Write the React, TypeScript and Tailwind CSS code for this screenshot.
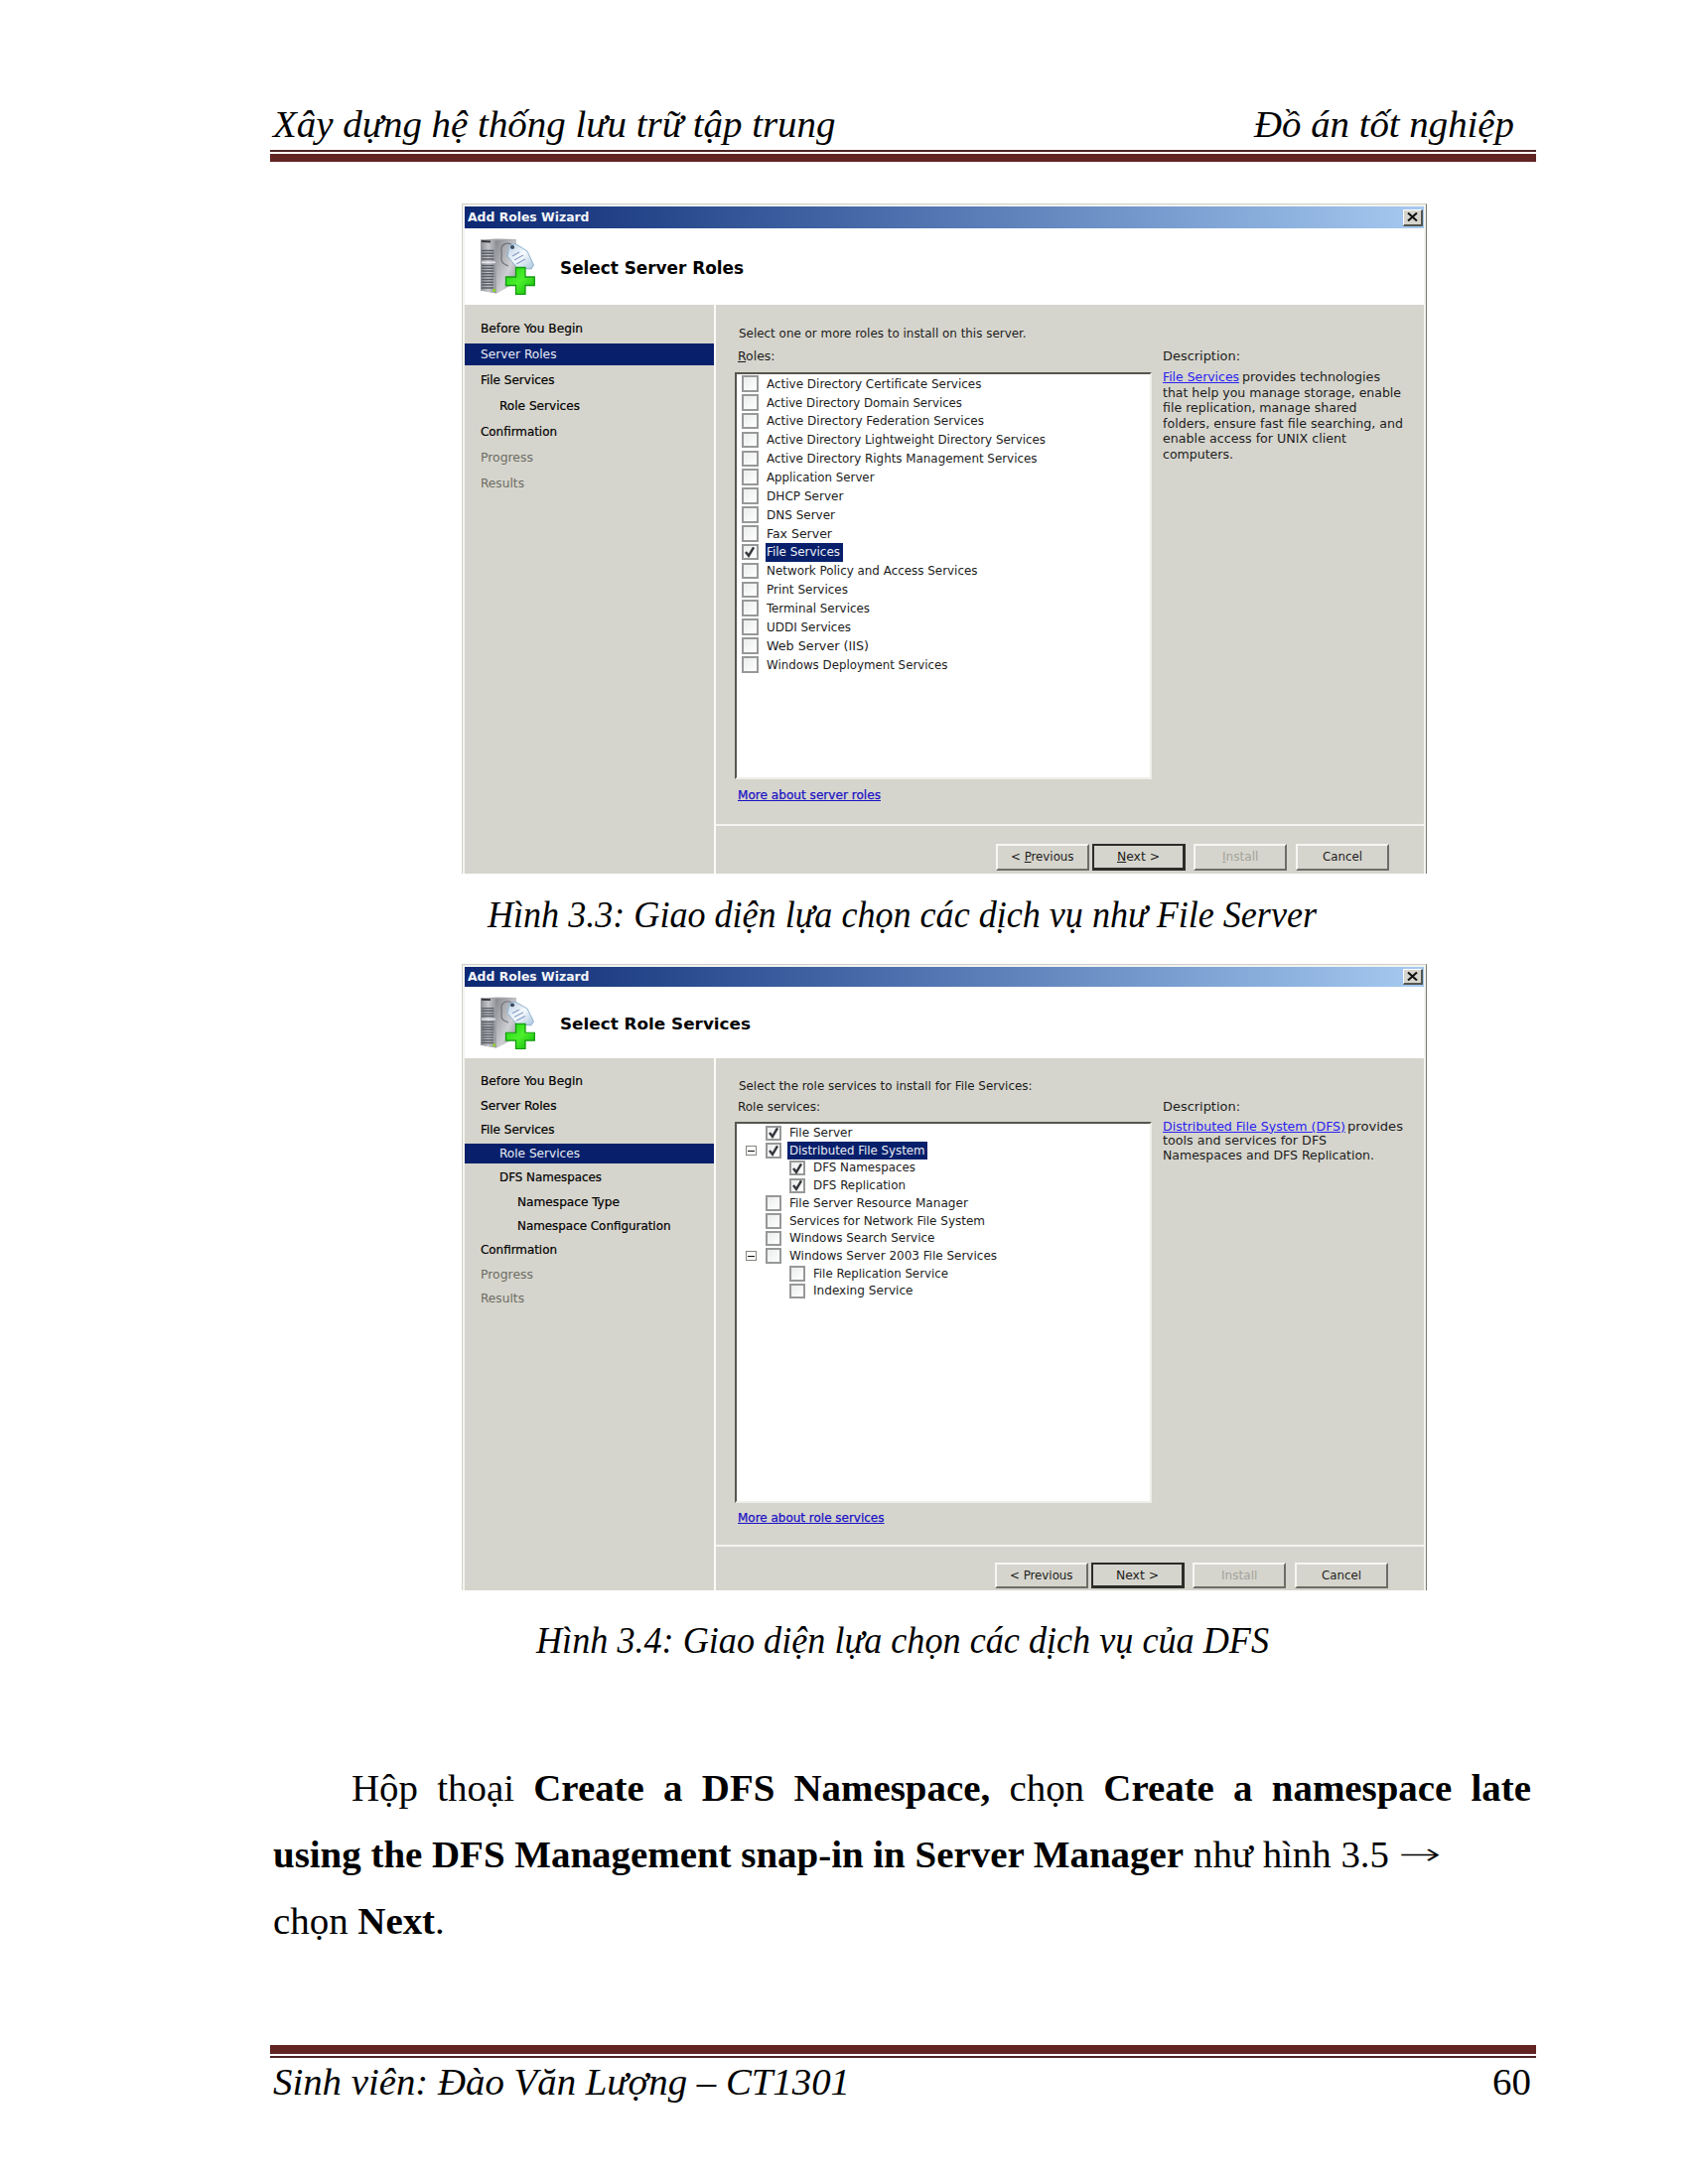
import React, { useLayoutEffect, useRef } from "react";

type FitProps = { w: number; className?: string; children: React.ReactNode };

/* Single line of text stretched or condensed to an exact advance width. */
function Fit({ w, className = "", children }: FitProps) {
  const ref = useRef<HTMLSpanElement>(null);
  useLayoutEffect(() => {
    const el = ref.current;
    if (!el) return;
    el.style.transform = "none";
    el.style.transform = `scaleX(${w / el.getBoundingClientRect().width})`;
  }, [w]);
  return (
    <span className="inline-block whitespace-nowrap align-top" style={{ width: w }}>
      <span ref={ref} className={`inline-block origin-left whitespace-pre ${className}`}>
        {children}
      </span>
    </span>
  );
}

function ServerIcon({ className }: { className: string }) {
  return (
    <svg viewBox="0 0 56 57" preserveAspectRatio="none" className={className}>
      <defs>
        <linearGradient id="front" x1="0" x2="1">
          <stop offset="0" stopColor="#8b8d92" />
          <stop offset="0.5" stopColor="#c3c5ca" />
          <stop offset="1" stopColor="#94969c" />
        </linearGradient>
        <linearGradient id="side" x1="0" x2="1" y2="1">
          <stop offset="0" stopColor="#86878c" />
          <stop offset="0.6" stopColor="#cfd0d4" />
          <stop offset="1" stopColor="#8c8d92" />
        </linearGradient>
        <linearGradient id="plus" x1="0" x2="1" y2="1">
          <stop offset="0" stopColor="#1fd010" />
          <stop offset="0.5" stopColor="#4cf02c" />
          <stop offset="1" stopColor="#0cb408" />
        </linearGradient>
        <linearGradient id="tag" x1="0" x2="1" y2="1">
          <stop offset="0" stopColor="#b4cde2" />
          <stop offset="0.5" stopColor="#f7fbff" />
          <stop offset="1" stopColor="#a9c4dc" />
        </linearGradient>
      </defs>
      <path d="M1 1.5 L17 0.5 L37 1 L37 44 L17 55.5 L1 52.5Z" fill="#a4a5aa" />
      <path d="M16 2.5 L37 1 L37 44 L17 55.5Z" fill="url(#side)" />
      <path d="M1 1.5 L16 2.5 L16.5 55.5 L1 52.5Z" fill="url(#front)" />
      <path d="M2 3 L11 3.4" stroke="#33353a" strokeWidth="2" />
      <path
        d="M2 12.5H14.5M2 15.3H14.5M2 18.1H14.5M2 21H14.5M2 27.5H14.5M2 30.3H14.5M2 33H14.5M2 35.8H14.5M2 38.6H14.5M2 41.4H14M2 44.2H14M2 47H14M2 50H14"
        stroke="#595c63"
        strokeWidth="1.5"
      />
      <path d="M2 24.3H16" stroke="#e6e8ec" strokeWidth="1.6" />
      <rect x="13.5" y="51" width="2.5" height="3" fill="#8ad41f" />
      <path d="M33 7C28 3 21 6 22 13C23 19 20 23 25 26L29 28" fill="none" stroke="#70757c" strokeWidth="1.3" />
      <path d="M30 7 L36 5.5 L48 13 L54.5 27 L52 31 L38 30 L28 18Z" fill="url(#tag)" stroke="#8fb0cc" strokeWidth="1" />
      <circle cx="33" cy="9" r="2.1" fill="#3d4c5e" />
      <path d="M33 18L40 14M35 22L44 17M37 26L46 21" stroke="#8d9fc8" strokeWidth="1.3" />
      <path
        d="M36.5 29.5h9.5v9.5h9.3v8.5h-9.3v9h-9.5v-9h-10v-8.5h10z"
        fill="url(#plus)"
        stroke="#139a10"
        strokeWidth="1.3"
      />
    </svg>
  );
}

type Nav = { t: string; w: number; pad?: string; state?: "active" | "muted" };
type Row = { t: string; w: number; level?: number; on?: boolean; sel?: boolean; tree?: boolean };
type Btn = { t: React.ReactNode; w: number; kind?: "default" | "off"; gap: string };

function Check({ on, className }: { on?: boolean; className: string }) {
  return (
    <span className={`flex shrink-0 items-center justify-center border-2 border-[#979898] bg-gradient-to-br from-[#ebecec] to-white ${className}`}>
      {on && (
        <svg viewBox="0 0 12 12" className="h-[12px] w-[12px]">
          <path d="M2 6 L5 9.8 L10 1.4" fill="none" stroke="#36383e" strokeWidth="2.5" />
        </svg>
      )}
    </span>
  );
}

type WizardProps = {
  title: string;
  titleW: number;
  nav: Nav[];
  intro: FitProps;
  label: FitProps;
  rows: Row[];
  desc: React.ReactNode;
  more: FitProps;
  buttons: Btn[];
  c: Record<
    | "frame" | "bar" | "close" | "head" | "icon" | "heading" | "nav" | "navRow" | "navHi" | "body" | "line"
    | "intro" | "list" | "row" | "box" | "desc" | "more" | "rule" | "buttons" | "button",
    string
  >;
};

function Wizard({ title, titleW, nav, intro, label, rows, desc, more, buttons, c }: WizardProps) {
  return (
    <section
      className={`ml-[465px] flex flex-col overflow-hidden border-l border-t border-r border-l-[#d2d2c8] border-r-[#77786f] border-t-[#cfcfc9] bg-[#f3f3ef] pl-[2px] pr-[2px] pt-[2px] font-['DejaVu_Sans_Condensed','DejaVu_Sans',sans-serif] text-[#1c1c1c] [font-stretch:condensed] ${c.frame}`}
    >
      <div className={`flex shrink-0 items-center justify-between bg-gradient-to-r from-[#0d2873] via-[#5577b3] to-[#a6caf0] pl-[3px] pr-[1px] ${c.bar}`}>
        <Fit w={122.5} className="text-[13px] font-bold text-[#f4f6fa]">Add Roles Wizard</Fit>
        <span className={`flex w-[20px] items-center justify-center border-b-2 border-l border-r-2 border-t border-b-[#55564f] border-l-white border-r-[#55564f] border-t-white bg-[#d6d5cd] ${c.close}`}>
          <svg viewBox="0 0 12 10" className="h-[9px] w-[11px]">
            <path d="M1 0.5 L11 9.5 M11 0.5 L1 9.5" stroke="#111" strokeWidth="2.2" />
          </svg>
        </span>
      </div>
      <div className={`flex shrink-0 bg-white pl-[15px] ${c.head}`}>
        <ServerIcon className={c.icon} />
        <div className={c.heading}>
          <Fit w={titleW} className="font-bold text-black">{title}</Fit>
        </div>
      </div>
      <div className="flex min-h-0 grow bg-[#d6d5cd]">
        <nav className={`w-[250.5px] shrink-0 ${c.nav}`}>
          {nav.map((n) => (
            <div key={n.t} className={`flex items-center ${c.navRow}`}>
              <div
                className={`flex w-full items-center ${c.navHi} ${n.pad ?? "pl-[16px]"} ${
                  n.state === "active" ? "bg-[#08206b] text-[#e8ecf5]" : n.state === "muted" ? "text-[#6c6c63]" : "text-black"
                }`}
              >
                <Fit w={n.w} className={n.state ? "" : "[-webkit-text-stroke:0.2px]"}>{n.t}</Fit>
              </div>
            </div>
          ))}
        </nav>
        <div className="w-[2.5px] shrink-0 bg-[#fbfbf9]" />
        <div className={`flex grow flex-col ${c.body}`}>
          <div className={`shrink-0 pl-[22.5px] ${c.intro}`}>
            <Fit {...intro} />
          </div>
          <div className="flex shrink-0 pl-[19px]">
            <div className="w-[420px] shrink-0">
              <div className={`pl-[3px] ${c.line}`}>
                <Fit {...label} />
              </div>
              <div className={`border-b-2 border-l-[2.5px] border-r-2 border-t-[2.5px] border-b-[#efefea] border-l-[#55564f] border-r-[#efefea] border-t-[#55564f] bg-white ${c.list}`}>
                {rows.map((r) => (
                  <div key={r.t} className={`flex items-center ${c.row} ${r.level === 2 ? "pl-[53px]" : r.level === 1 ? "pl-[9px]" : "pl-[5px]"}`}>
                    {r.level === 1 && (
                      <span className={`mr-[9px] flex h-[10.5px] w-[11px] items-center justify-center ${r.tree ? "border border-[#85867f]" : ""}`}>
                        {r.tree && <span className="h-px w-[7px] bg-[#111]" />}
                      </span>
                    )}
                    <Check on={r.on} className={c.box} />
                    <span className={`flex h-full items-center pl-[1.5px] pr-[3px] ${r.level ? "ml-[6px]" : "ml-[7px]"} ${r.sel ? "bg-[#08206b] text-[#e8ecf5]" : ""}`}>
                      <Fit w={r.w}>{r.t}</Fit>
                    </span>
                  </div>
                ))}
              </div>
              <div className={`pl-[3px] ${c.more}`}>
                <Fit {...more} className="text-[#1a12c4] underline [-webkit-text-stroke:0.25px]" />
              </div>
            </div>
            <div className="ml-[10.5px]">
              <div className={c.line}>
                <Fit w={78}>Description:</Fit>
              </div>
              <div className={`flex flex-col ${c.desc}`}>{desc}</div>
            </div>
          </div>
          <div className={`h-[2px] shrink-0 bg-[#f4f4f0] ${c.rule}`} />
          <div className={`flex ${c.buttons}`}>
            {buttons.map((b, i) => (
              <div
                key={i}
                className={`flex w-[94px] shrink-0 items-center justify-center ${c.button} ${b.gap} ${
                  b.kind === "default"
                    ? "border-b-[3px] border-l-2 border-r-[3px] border-t-2 border-[#2c2c29]"
                    : "border-b-[2.5px] border-l-2 border-r-[2.5px] border-t-2 border-b-[#6c6d66] border-l-[#f6f6f3] border-r-[#6c6d66] border-t-[#f6f6f3]"
                } ${b.kind === "off" ? "text-[#a3a39b]" : ""}`}
              >
                <Fit w={b.w}>{b.t}</Fit>
              </div>
            ))}
          </div>
        </div>
      </div>
    </section>
  );
}

const roleNav: Nav[] = [
  { t: "Before You Begin", w: 103 },
  { t: "Server Roles", w: 76.5, state: "active" },
  { t: "File Services", w: 74.5 },
  { t: "Role Services", w: 81, pad: "pl-[34.5px]" },
  { t: "Confirmation", w: 77 },
  { t: "Progress", w: 53, state: "muted" },
  { t: "Results", w: 44, state: "muted" },
];

const roleRows: Row[] = [
  { t: "Active Directory Certificate Services", w: 216.5 },
  { t: "Active Directory Domain Services", w: 197 },
  { t: "Active Directory Federation Services", w: 219 },
  { t: "Active Directory Lightweight Directory Services", w: 281 },
  { t: "Active Directory Rights Management Services", w: 272.5 },
  { t: "Application Server", w: 108.5 },
  { t: "DHCP Server", w: 77.5 },
  { t: "DNS Server", w: 69 },
  { t: "Fax Server", w: 66 },
  { t: "File Services", w: 74 },
  { t: "Network Policy and Access Services", w: 212.5 },
  { t: "Print Services", w: 82 },
  { t: "Terminal Services", w: 104 },
  { t: "UDDI Services", w: 85 },
  { t: "Web Server (IIS)", w: 103 },
  { t: "Windows Deployment Services", w: 182.5 },
].map((r) => (r.t === "File Services" ? { ...r, on: true, sel: true } : r));

const serviceNav: Nav[] = [
  { t: "Before You Begin", w: 103 },
  { t: "Server Roles", w: 76.5 },
  { t: "File Services", w: 74.5 },
  { t: "Role Services", w: 81, pad: "pl-[34.5px]", state: "active" },
  { t: "DFS Namespaces", w: 103, pad: "pl-[34.5px]" },
  { t: "Namespace Type", w: 103, pad: "pl-[53px]" },
  { t: "Namespace Configuration", w: 154.5, pad: "pl-[53px]" },
  { t: "Confirmation", w: 77 },
  { t: "Progress", w: 53, state: "muted" },
  { t: "Results", w: 44, state: "muted" },
];

const serviceRows: Row[] = [
  { t: "File Server", w: 63.5, level: 1, on: true },
  { t: "Distributed File System", w: 136.5, level: 1, on: true, sel: true, tree: true },
  { t: "DFS Namespaces", w: 103, level: 2, on: true },
  { t: "DFS Replication", w: 93, level: 2, on: true },
  { t: "File Server Resource Manager", w: 180, level: 1 },
  { t: "Services for Network File System", w: 197, level: 1 },
  { t: "Windows Search Service", w: 146.5, level: 1 },
  { t: "Windows Server 2003 File Services", w: 209, level: 1, tree: true },
  { t: "File Replication Service", w: 136, level: 2 },
  { t: "Indexing Service", w: 100.5, level: 2 },
];

const link = "text-[#2a22f0] underline";

export default function App() {
  return (
    <main className="flex h-[2200px] w-[1700px] flex-col overflow-hidden bg-white pt-[103px] font-['Liberation_Serif',serif] text-[38.9px] text-black">
      <header className="ml-[272px] w-[1275px] shrink-0">
        <div className="flex h-[48px] justify-between pl-[3px] pr-[22.5px] italic leading-[44px]">
          <Fit w={566.5}>Xây dựng hệ thống lưu trữ tập trung</Fit>
          <Fit w={262}>Đồ án tốt nghiệp</Fit>
        </div>
        <div className="h-[2px] bg-[#4f2426]" />
        <div className="mt-[2px] h-[8px] bg-[#622423]" />
      </header>

      <Wizard
        title="Select Server Roles"
        titleW={185}
        nav={roleNav}
        intro={{ w: 289.5, children: "Select one or more roles to install on this server." }}
        label={{ w: 37.5, children: <><u>R</u>oles:</> }}
        rows={roleRows}
        more={{ w: 144, children: "More about server roles" }}
        desc={
          <>
            <div className="flex gap-[3.5px]">
              <Fit w={77} className={link}>File Services</Fit>
              <Fit w={139}>provides technologies</Fit>
            </div>
            <Fit w={240}>that help you manage storage, enable</Fit>
            <Fit w={195.5}>file replication, manage shared</Fit>
            <Fit w={242}>folders, ensure fast file searching, and</Fit>
            <Fit w={185}>enable access for UNIX client</Fit>
            <Fit w={71}>computers.</Fit>
          </>
        }
        buttons={[
          { t: <>&lt; <u>P</u>revious</>, w: 63.5, gap: "ml-[281.5px]" },
          { t: <><u>N</u>ext &gt;</>, w: 43, kind: "default", gap: "ml-[3px]" },
          { t: <><u>I</u>nstall</>, w: 36.5, kind: "off", gap: "ml-[8.5px]" },
          { t: "Cancel", w: 40, gap: "ml-[8.5px]" },
        ]}
        c={{
          frame: "mt-[42px] h-[675px] w-[972px] shrink-0 text-[13px]",
          bar: "h-[22px]",
          close: "h-[17px]",
          head: "h-[76.5px]",
          icon: "mt-[10px] h-[57px] w-[56px]",
          heading: "ml-[25px] mt-[28.5px] text-[17px] leading-[22px]",
          nav: "pt-[11.7px]",
          navRow: "h-[26px]",
          navHi: "h-[22px]",
          body: "pt-[19px]",
          line: "h-[20px] leading-[20px]",
          intro: "mb-[3.5px] h-[20px] leading-[20px]",
          list: "mt-[6px] h-[410px]",
          row: "h-[18.87px]",
          box: "h-[16.5px] w-[16.5px]",
          desc: "mt-[3px] leading-[15.6px]",
          more: "mt-[6px] h-[20px] leading-[20px]",
          rule: "mt-[18.5px]",
          buttons: "pt-[18px]",
          button: "h-[27px]",
        }}
      />

      <div className="ml-[491px] mt-[18.6px] h-[44px] shrink-0 italic leading-[44px]">
        <Fit w={835}>Hình 3.3: Giao diện lựa chọn các dịch vụ như File Server</Fit>
      </div>

      <Wizard
        title="Select Role Services"
        titleW={192}
        nav={serviceNav}
        intro={{ w: 295.5, children: "Select the role services to install for File Services:" }}
        label={{ w: 83, children: "Role services:" }}
        rows={serviceRows}
        more={{ w: 147.5, children: "More about role services" }}
        desc={
          <>
            <div className="flex gap-[2px]">
              <Fit w={184} className={link}>Distributed File System (DFS)</Fit>
              <Fit w={56}>provides</Fit>
            </div>
            <Fit w={165}>tools and services for DFS</Fit>
            <Fit w={213}>Namespaces and DFS Replication.</Fit>
          </>
        }
        buttons={[
          { t: "< Previous", w: 63.5, gap: "ml-[280.5px]" },
          { t: "Next >", w: 43, kind: "default", gap: "ml-[3px]" },
          { t: "Install", w: 36.5, kind: "off", gap: "ml-[8.5px]" },
          { t: "Cancel", w: 40, gap: "ml-[8.5px]" },
        ]}
        c={{
          frame: "mt-[28.4px] h-[631px] w-[971.5px] shrink-0 text-[12.3px]",
          bar: "h-[20px]",
          close: "h-[16px]",
          head: "h-[72px]",
          icon: "mt-[10px] h-[53px] w-[56px]",
          heading: "ml-[25px] mt-[27px] text-[16.3px] leading-[21px]",
          nav: "pt-[11.4px]",
          navRow: "h-[24.3px]",
          navHi: "h-[20px]",
          body: "pt-[19px]",
          line: "h-[19px] leading-[19px]",
          intro: "mb-[1.7px] h-[19px] leading-[19px]",
          list: "mt-[5.8px] h-[383.5px]",
          row: "h-[17.7px]",
          box: "h-[15.5px] w-[16px]",
          desc: "mt-[2.9px] leading-[14.9px]",
          more: "mt-[5.9px] h-[19px] leading-[19px]",
          rule: "mt-[17.3px]",
          buttons: "pt-[16.2px]",
          button: "h-[25.5px] pt-px",
        }}
      />

      <div className="ml-[540px] mt-[28.2px] h-[44px] shrink-0 italic leading-[44px]">
        <Fit w={738}>Hình 3.4: Giao diện lựa chọn các dịch vụ của DFS</Fit>
      </div>

      <article className="ml-[275px] mt-[92.4px] w-[1267px] shrink-0 leading-[67px]">
        <p className="pl-[79px] [text-align-last:justify]">
          Hộp thoại <b>Create a DFS Namespace,</b> chọn <b>Create a namespace late</b>
        </p>
        <p className="flex h-[67px]">
          <Fit w={917} className="font-bold">using the DFS Management snap-in in Server Manager</Fit>
          <span className="ml-[10px]">
            <Fit w={197}>như hình 3.5</Fit>
          </span>
          <span className="ml-[8.5px] font-['DejaVu_Sans',sans-serif] text-[30px] font-extralight">
            <Fit w={43}>→</Fit>
          </span>
        </p>
        <p>
          chọn <b>Next</b>.
        </p>
      </article>

      <footer className="ml-[272px] mt-[92.4px] w-[1275px] shrink-0">
        <div className="h-[9px] bg-[#622423]" />
        <div className="mt-[2px] h-[2px] bg-[#4f2426]" />
        <div className="mt-[2px] flex h-[44px] justify-between pl-[3px] pr-[5px] leading-[44px]">
          <Fit w={581} className="italic">Sinh viên: Đào Văn Lượng – CT1301</Fit>
          <span>60</span>
        </div>
      </footer>
    </main>
  );
}
